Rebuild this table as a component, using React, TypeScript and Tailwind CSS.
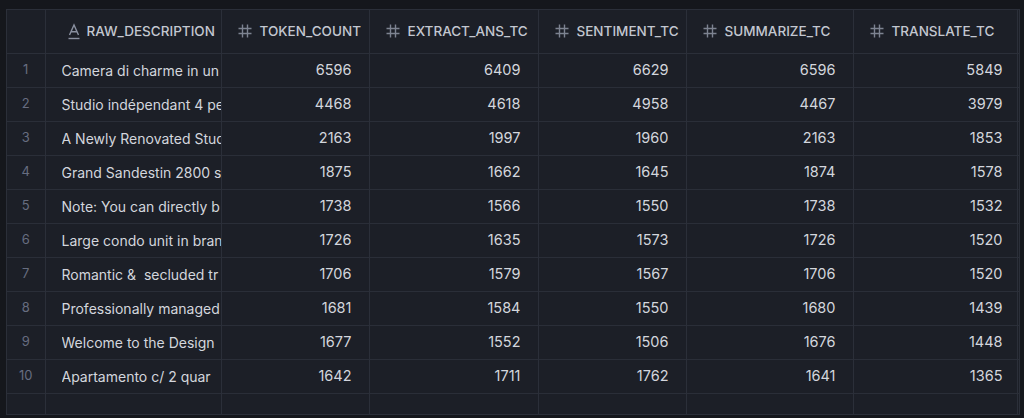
import React from "react";

// columns of the result grid
const columns = ["TOKEN_COUNT", "EXTRACT_ANS_TC", "SENTIMENT_TC", "SUMMARIZE_TC", "TRANSLATE_TC"];

const rows: [string, number[]][] = [
	["Camera di charme in un", [6596, 6409, 6629, 6596, 5849]],
	["Studio indépendant 4 pe", [4468, 4618, 4958, 4467, 3979]],
	["A Newly Renovated Stud", [2163, 1997, 1960, 2163, 1853]],
	["Grand Sandestin 2800 s", [1875, 1662, 1645, 1874, 1578]],
	["Note: You can directly b", [1738, 1566, 1550, 1738, 1532]],
	["Large condo unit in bran", [1726, 1635, 1573, 1726, 1520]],
	["Romantic &\u00a0 secluded tr", [1706, 1579, 1567, 1706, 1520]],
	["Professionally managed", [1681, 1584, 1550, 1680, 1439]],
	["Welcome to the Design", [1677, 1552, 1506, 1676, 1448]],
	["Apartamento c/ 2 quar", [1642, 1711, 1762, 1641, 1365]],
];

const HashIcon = () => (
	<svg className="shrink-0" width="16" height="16" viewBox="0 0 16 16" fill="none" stroke="#7d8391" strokeWidth="1.4">
		<path d="M5.5 1.5v13M10.5 1.5v13M1.5 5.5h13M1.5 10.5h13" />
	</svg>
);

const TextIcon = () => (
	<svg className="shrink-0" width="12" height="17" viewBox="0 0 12 17" fill="none" stroke="#8a90a0" strokeWidth="1.4">
		<path d="M1.5 12L6 2l4.5 10M3 8.7h6" />
		<path d="M0.5 15.5h11" />
	</svg>
);

const App = () => {
	return (
		<div className="h-[418px] w-[1024px] bg-[#15171c] pl-[6px] pt-[9px] font-['Inter',sans-serif]">
			<div className="h-[406px] w-[1014px] overflow-hidden border border-[#2b2f39] bg-[#1c1f27]">
				<table className="w-[1012px] table-fixed border-collapse text-[14px]">
					<colgroup>
						<col className="w-[38px]" />
						<col className="w-[176px]" />
						<col className="w-[148px]" />
						<col className="w-[169px]" />
						<col className="w-[148px]" />
						<col className="w-[167px]" />
						<col className="w-[164px]" />
						<col />
					</colgroup>
					<thead>
						<tr className="h-[43px] border-b border-[#2b2f39]">
							<th className="border-r border-[#2b2f39]"></th>
							<th className="border-r border-[#2b2f39] pl-[22px] text-left font-medium">
								<div className="flex items-center gap-[7px] text-[13.5px] text-[#c3c7d0]">
									<TextIcon />
									<span>RAW_DESCRIPTION</span>
								</div>
							</th>
							{columns.map((col) => (
								<th
									key={col}
									className="overflow-hidden border-r border-[#2b2f39] pl-[15px] text-left font-medium"
								>
									<div className="flex items-center gap-[7px] whitespace-nowrap text-[13.5px] text-[#c3c7d0]">
										<HashIcon />
										<span>{col}</span>
									</div>
								</th>
							))}
							<th></th>
						</tr>
					</thead>
					<tbody>
						{rows.map(([desc, nums], i) => (
							<tr key={i} className="h-[34px] border-b border-[#2a2e38]">
								<td className="border-r border-[#2b2f39] text-center text-[13px] text-[#676d80]">
									{i + 1}
								</td>
								<td className="border-r border-[#2b2f39] pl-[16px]">
									<div className="overflow-hidden whitespace-nowrap text-[#d3d6dd]">
										{desc}
									</div>
								</td>
								{nums.map((n, j) => (
									<td
										key={j}
										className={
											j === 4
												? "border-r border-[#2b2f39] pr-[14px] text-right text-[14.5px] text-[#d3d6dd]"
												: "border-r border-[#2b2f39] pr-[17px] text-right text-[14.5px] text-[#d3d6dd]"
										}
									>
										{n}
									</td>
								))}
								<td></td>
							</tr>
						))}
						<tr className="h-[22px]">
							<td className="border-r border-[#2b2f39]"></td>
							<td className="border-r border-[#2b2f39]"></td>
							{columns.map((col) => (
								<td key={col} className="border-r border-[#2b2f39]"></td>
							))}
							<td></td>
						</tr>
					</tbody>
				</table>
			</div>
		</div>
	);
};

export default App;
